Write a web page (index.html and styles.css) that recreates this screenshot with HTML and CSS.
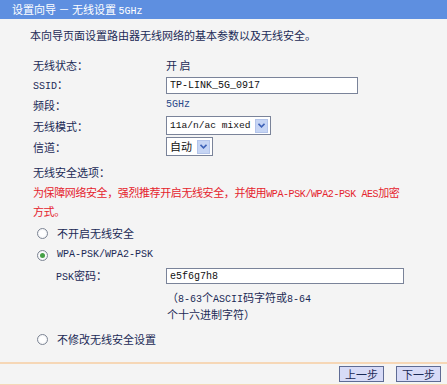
FILE: index.html
```html
<!DOCTYPE html>
<html lang="zh-CN">
<head>
  <meta charset="UTF-8" />
  <title>设置向导 - 无线设置 5GHz</title>
  <link rel="stylesheet" href="styles.css">
</head>
<body>
  <div class="title">设置向导 － 无线设置 <span class="en">5GHz</span></div>

  <div class="content">
    <p class="intro">本向导页面设置路由器无线网络的基本参数以及无线安全。</p>

    <div class="form">
      <div class="row">
        <label>无线状态：</label>
        <span>开 启</span>
      </div>
      <div class="row">
        <label><span class="en">SSID</span>：</label>
        <input type="text" class="text ssid en" value="TP-LINK_5G_0917" />
      </div>
      <div class="row">
        <label>频段：</label>
        <span class="en band">5GHz</span>
      </div>
      <div class="row tall">
        <label>无线模式：</label>
        <span class="select mode">
          <select class="en"><option>11a/n/ac mixed</option></select>
          <i class="arrow"><svg width="7" height="5" viewBox="0 0 7 5"><path d="M0.5 0.8 L3.5 3.8 L6.5 0.8" fill="none" stroke="#3f63b8" stroke-width="1.6"/></svg></i>
        </span>
      </div>
      <div class="row tall">
        <label>信道：</label>
        <span class="select channel">
          <select><option>自动</option></select>
          <i class="arrow"><svg width="7" height="5" viewBox="0 0 7 5"><path d="M0.5 0.8 L3.5 3.8 L6.5 0.8" fill="none" stroke="#3f63b8" stroke-width="1.6"/></svg></i>
        </span>
      </div>

      <div class="section">无线安全选项：</div>
      <p class="warn">为保障网络安全，强烈推荐开启无线安全，并使用<span class="en">WPA-PSK/WPA2-PSK AES</span>加密<br />方式。</p>

      <label class="radio"><input type="radio" name="sec" /> 不开启无线安全</label>
      <label class="radio"><input type="radio" name="sec" checked /> <span class="en">WPA-PSK/WPA2-PSK</span></label>
      <div class="psk">
        <label><span class="en">PSK</span>密码：</label>
        <input type="text" class="text pass en" value="e5f6g7h8" />
      </div>
      <p class="hint">（<span class="en">8-63</span>个<span class="en">ASCII</span>码字符或<span class="en">8-64</span><br />个十六进制字符）</p>
      <label class="radio last"><input type="radio" name="sec" /> 不修改无线安全设置</label>
    </div>
  </div>

  <div class="footer">
    <button class="btn">上一步</button>
    <button class="btn">下一步</button>
  </div>
</body>
</html>
```

FILE: styles.css
```css
* {
  box-sizing: border-box;
}

html, body {
  margin: 0;
}

body {
  width: 447px;
  height: 385px;
  overflow: hidden;
  display: flex;
  flex-direction: column;
  background-color: #f4f4f4;
  font-family: "Noto Sans CJK SC", sans-serif;
  font-size: 11px;
  line-height: 14px;
  color: #1b2a56;
}

.en {
  font-family: "Liberation Mono", monospace;
  font-size: 10px;
}

.title {
  height: 19px;
  line-height: 19px;
  padding-left: 12px;
  background-color: #5e8fe0;
  color: #fff;
}

.content {
  flex: 1;
  padding: 0 20px 0 30px;
}

.intro {
  margin: 6px 0 10px;
  line-height: 20px;
}

.form {
  margin-left: 3px;
}

.row {
  display: grid;
  grid-template-columns: 133px 1fr;
  align-items: center;
  height: 20px;
}

.row.tall {
  height: 21px;
}

.band {
  color: #2a4a8a;
}

.text {
  height: 17px;
  padding: 0 3px;
  border: 1px solid #7a8399;
  background: #fff;
  color: #111;
  outline: none;
}

.ssid {
  width: 192px;
}

.select {
  display: inline-flex;
  align-items: center;
  height: 19px;
  padding-right: 2px;
  border: 1px solid #7a8399;
  background: #fff;
}

.select select {
  appearance: none;
  -webkit-appearance: none;
  flex: 1;
  min-width: 0;
  width: 0;
  border: none;
  background: transparent;
  padding: 0 0 0 3px;
  color: #111;
  font-size: 11px;
  outline: none;
}

.select select.en {
  font-size: 9.6px;
}

.select.mode {
  width: 105px;
}

.select.channel {
  width: 47px;
}

.arrow {
  display: flex;
  align-items: center;
  justify-content: center;
  flex: none;
  width: 13px;
  height: 14px;
  background-color: #c6d5f4;
  border: 1px solid #b3c4ea;
}

.section {
  margin-top: 5px;
  height: 20px;
  line-height: 20px;
}

.warn {
  margin: 2px 0 0;
  line-height: 17px;
  letter-spacing: -0.4px;
  color: #e5232d;
}

.radio {
  display: flex;
  align-items: center;
  height: 22px;
  padding-left: 4px;
  gap: 9px;
}

.radio:first-of-type {
  margin-top: 2px;
}

.radio.last {
  margin-top: 7px;
}

.radio input {
  appearance: none;
  -webkit-appearance: none;
  margin: 0;
  width: 11px;
  height: 11px;
  border: 1px solid #7d8594;
  border-radius: 50%;
  background: radial-gradient(circle, #fff 40%, #e6e8ec 100%);
  display: grid;
  place-items: center;
}

.radio input:checked::after {
  content: "";
  width: 5px;
  height: 5px;
  border-radius: 50%;
  background-color: #46a046;
}

.psk {
  display: grid;
  grid-template-columns: 110px 1fr;
  align-items: center;
  height: 20px;
  margin-left: 23px;
}

.pass {
  width: 238px;
  height: 16px;
}

.hint {
  margin: 4px 0 0 134px;
  line-height: 14px;
}

.footer {
  height: 23px;
  display: flex;
  justify-content: flex-end;
  align-items: center;
  gap: 12px;
  padding-right: 6px;
  border-top: 2px solid #f6d7b6;
  border-bottom: 1px solid #f6d7b6;
  background-color: #f4f4f4;
}

.btn {
  width: 45px;
  height: 16px;
  padding: 0;
  border: 1px solid #5e6b94;
  background-color: #d7dbf7;
  color: #1b2a56;
  font-family: "Noto Sans CJK SC", sans-serif;
  font-size: 11px;
  line-height: 14px;
  cursor: pointer;
}
```
